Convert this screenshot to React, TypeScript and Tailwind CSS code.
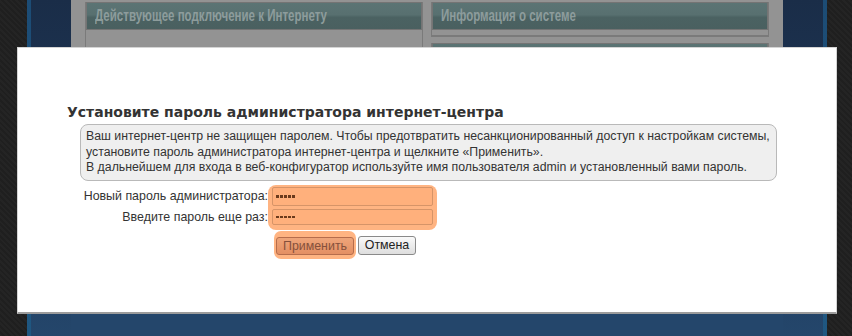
import React from "react";

const sans = "font-['Liberation_Sans',Arial,sans-serif]";

function PanelHeader({ title }: { title: string }) {
  return (
    <div className="h-[28px] border border-[#747474] bg-[linear-gradient(#5b7474_0%,#587070_45%,#4b6262_55%,#4a6060_100%)] px-[8px] flex items-center overflow-hidden">
      <span className="inline-block origin-left scale-x-[0.72] font-bold text-[16px] text-[#8d9c9c] whitespace-nowrap">
        {title}
      </span>
    </div>
  );
}

function SideColumn({ stripeRight }: { stripeRight?: boolean }) {
  return (
    <div className="flex h-full">
      {!stripeRight && <div className="w-[4px] bg-[linear-gradient(#1c4c75,#1f5781)]" />}
      <div className="w-[40px] bg-[linear-gradient(#1a2d48_0%,#1d3554_40%,#24466b_100%)]" />
      {stripeRight && <div className="w-[4px] bg-[linear-gradient(#1c4c75,#1f5781)]" />}
    </div>
  );
}

function Dots() {
  return (
    <div className="flex items-center gap-[1.5px]">
      {[0, 1, 2, 3, 4].map((i) => (
        <span key={i} className="w-[2.5px] h-[2.5px] bg-[#6a3a1c]" />
      ))}
    </div>
  );
}

export default function App() {
  return (
    <div className={`relative w-[852px] h-[336px] overflow-hidden flex bg-[#232323] ${sans}`}>
      {/* page behind the dialog */}
      <div className="w-[27px] bg-[repeating-linear-gradient(45deg,#242424_0px,#242424_2px,#1f1f1f_2px,#1f1f1f_4px)]" />
      <SideColumn />
      <div className="w-[712px] flex flex-col bg-[#24466b]">
        <div className="h-[300px] bg-[#939393] px-[14px] pt-[2px] flex gap-[8px]">
          <div className="w-[338px] flex flex-col border-x border-[#7a7a7a]">
            <PanelHeader title="Действующее подключение к Интернету" />
            <div className="flex-1" />
          </div>
          <div className="w-[338px] flex flex-col gap-[6px]">
            <div className="border-b-2 border-x border-[#7a7a7a]">
              <PanelHeader title="Информация о системе" />
              <div className="h-[5px]" />
            </div>
            <div className="border-x border-[#7a7a7a]">
              <div className="h-[28px] border border-[#747474] bg-[linear-gradient(#5b7474,#4a6060)]" />
            </div>
          </div>
        </div>
      </div>
      <SideColumn stripeRight />
      <div className="flex-1 bg-[repeating-linear-gradient(45deg,#242424_0px,#242424_2px,#1f1f1f_2px,#1f1f1f_4px)]" />

      {/* dialog */}
      <div className="absolute left-[17px] top-[47px] w-[820px] h-[267px] bg-white border border-[#d4d4d4] border-b-2 border-b-[#9c9c9c] pl-[49px] pt-[56px]">
        <h2 className="font-['DejaVu_Sans',Verdana,sans-serif] font-bold text-[14px] leading-[17px] text-[#333]">
          Установите пароль администратора интернет-центра
        </h2>
        <div className="mt-[3px] ml-[13px] w-[697px] h-[57px] rounded-[8px] border border-[#b9b9b9] bg-[#efefef] pl-[5px] pt-[4px] text-[12.3px] leading-[15.5px] text-[#333] whitespace-nowrap">
          Ваш интернет-центр не защищен паролем. Чтобы предотвратить несанкционированный доступ к настройкам системы,
          <br />
          установите пароль администратора интернет-центра и щелкните «Применить».
          <br />
          В дальнейшем для входа в веб-конфигуратор используйте имя пользователя admin и установленный вами пароль.
        </div>

        <div className="mt-[4px] flex">
          <div className="w-[202px] -ml-px flex flex-col items-end pt-[2px] gap-[3px] text-[12.4px] text-[#333]">
            <label className="h-[19px] leading-[19px] whitespace-nowrap">Новый пароль администратора:</label>
            <label className="h-[16px] leading-[16px] whitespace-nowrap">Введите пароль еще раз:</label>
          </div>
          <div className="w-[169px] rounded-[8px] bg-[#ffb482] px-[4px] pt-[2px] pb-[5px] flex flex-col gap-[3px]">
            <div className="h-[19px] w-full rounded-[2px] border border-[#d69468] bg-[#ffb07c] px-[3px] flex items-center">
              <Dots />
            </div>
            <div className="h-[16px] w-full rounded-[2px] border border-[#d69468] bg-[#ffb07c] px-[3px] flex items-center">
              <Dots />
            </div>
          </div>
        </div>

        <div className="mt-[1px] ml-[207px] flex items-center gap-[2px]">
          <div className="rounded-[7px] bg-[#ffb482] p-[2px]">
            <button className="w-[78px] h-[18px] rounded-[3px] border border-[#b66d4c] bg-[linear-gradient(#eea57a,#e48f63)] text-[12.4px] leading-[16px] text-[#85503c]">
              Применить
            </button>
          </div>
          <button className="w-[58px] h-[19px] rounded-[3px] border border-[#8a8a8a] bg-[linear-gradient(#fafafa,#dedede)] text-[12.4px] leading-[17px] text-[#222]">
            Отмена
          </button>
        </div>
      </div>
    </div>
  );
}
